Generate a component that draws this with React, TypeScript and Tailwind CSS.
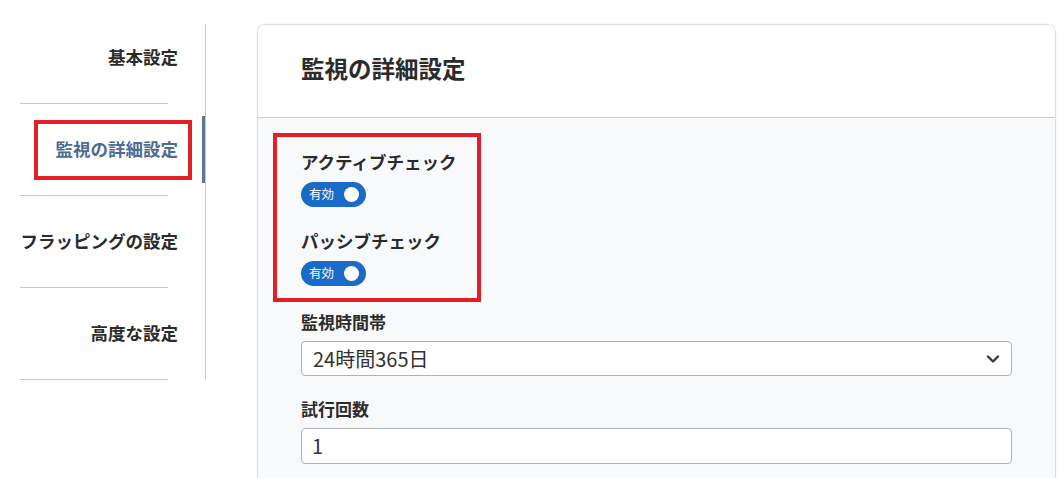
import React from 'react';

const font = { fontFamily: '"Noto Sans CJK JP", "Noto Sans", sans-serif' };

const navItems = [
  { label: '基本設定', active: false },
  { label: '監視の詳細設定', active: true },
  { label: 'フラッピングの設定', active: false },
  { label: '高度な設定', active: false },
];

const Toggle: React.FC = () => (
  <div className="mt-2 flex h-[25px] w-[65px] items-center justify-between rounded-full bg-[#1a6bc8] pl-[8px] pr-[7px]">
    <span className="text-[12.5px] leading-none text-white">有効</span>
    <span className="h-[15px] w-[15px] rounded-full bg-white" />
  </div>
);

const App: React.FC = () => {
  return (
    <div className="flex h-[478px] w-[1064px] overflow-hidden bg-white text-[#2b2b2b]" style={font}>
      {/* Sidebar */}
      <aside className="mt-[24px] h-[355px] w-[206px] shrink-0 border-r border-[#c4c9ce]">
        <ul className="-mt-[13px] pl-[20px]">
          {navItems.map((item) => (
            <li key={item.label}>
              <div className={'flex items-center ' + (item.label === '基本設定' ? 'h-[92px]' : 'h-[91px]')}>
                <div className="flex w-[185px] items-center">
                  <div
                    className={
                      'flex h-[60px] items-center justify-end text-[17.5px] font-bold ' +
                      (item.active
                        ? 'ml-[14px] w-[158px] border-4 border-[#e31f26] pr-[10px] text-[#4d6b94]'
                        : 'w-[158px]')
                    }
                  >
                    {item.label}
                  </div>
                  {item.active && <div className="ml-auto h-[67px] w-[3px] bg-[#5a7598]" />}
                </div>
              </div>
              <div className="h-px w-[148px] bg-[#c2c8ce]" />
            </li>
          ))}
        </ul>
      </aside>

      {/* Card */}
      <main className="ml-[51px] mt-[24px] w-[799px] shrink-0">
        <div className="h-[470px] overflow-hidden rounded-[8px] border border-[#dcdfe3] shadow-[0_0_3px_rgba(0,0,0,0.06)]">
          <div className="flex h-[93px] items-center border-b border-[#c3ccd4] bg-white px-[43px] pb-[4px]">
            <h2 className="text-[23.5px] font-bold text-[#2b2b2b]">監視の詳細設定</h2>
          </div>
          <div className="h-full bg-[#f8f9fa] px-[43px] pt-[15px]">
            <div className="-ml-[28px] w-[208px] border-4 border-[#e31f26] pb-[12px] pl-[24px] pt-[13px]">
              <div className="text-[17.5px] font-bold leading-[24px]">アクティブチェック</div>
              <Toggle />
              <div className="mt-[22px] text-[17.5px] font-bold leading-[24px]">パッシブチェック</div>
              <Toggle />
            </div>

            <div className="mt-[8px] text-[17px] font-bold leading-[24px]">監視時間帯</div>
            <div className="mt-[7px] flex h-[35px] items-center justify-between rounded-[4px] border border-[#aeb2b6] bg-white pl-[11px] pr-[11px]">
              <span className="text-[20px] text-[#333]">24時間365日</span>
              <svg width="14" height="10" viewBox="0 0 14 10" fill="none" stroke="#343a40" strokeWidth="2.4" strokeLinecap="round" strokeLinejoin="round">
                <path d="M2 2.5 7 7.5 12 2.5" />
              </svg>
            </div>

            <div className="mt-[21px] text-[17px] font-bold leading-[24px]">試行回数</div>
            <div className="mt-[7px] flex h-[36px] items-center rounded-[4px] border border-[#aeb2b6] bg-white pl-[10px]">
              <span className="text-[20px] text-[#333]">1</span>
            </div>
          </div>
        </div>
      </main>
    </div>
  );
};

export default App;
